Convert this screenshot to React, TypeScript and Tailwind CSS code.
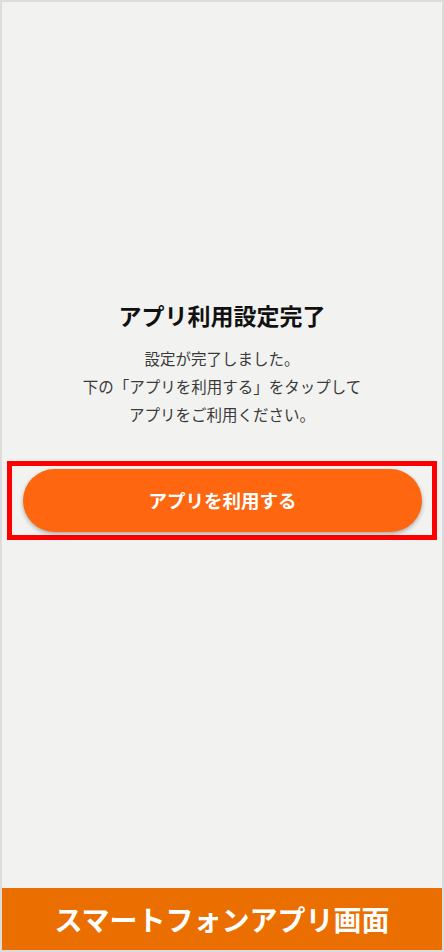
export default function App() {
  return (
    <div
      className="flex h-[952px] w-[444px] flex-col border-2 border-[#dcdcdb] bg-[#f2f2f0]"
      style={{ fontFamily: '"Noto Sans CJK JP", "Noto Sans", sans-serif' }}
    >
      <main className="flex flex-1 flex-col pt-[297px]">
        <h1 className="text-center text-[23px] font-bold leading-[32px] text-[#111]">アプリ利用設定完了</h1>
        <p className="mt-[13px] text-center text-[15.5px] leading-[28px] text-[#3a3a3a]">
          設定が完了しました。
          <br />
          下の「アプリを利用する」をタップして
          <br />
          アプリをご利用ください。
        </p>
        <div className="ml-[5px] mt-[33px] w-[430px] border-[5px] border-[#ff0000] pb-[3px] pl-[11px] pr-[10px] pt-[3px]">
          <button className="flex h-[63px] w-full items-center justify-center rounded-full bg-[#ff6610] text-[18.5px] font-bold text-white shadow-[0_2px_4px_rgba(0,0,0,0.3)]">
            アプリを利用する
          </button>
        </div>
      </main>
      <footer className="flex h-[62px] items-center justify-center bg-[#eb6e00] text-[28px] font-bold text-white">
        スマートフォンアプリ画面
      </footer>
    </div>
  );
}
